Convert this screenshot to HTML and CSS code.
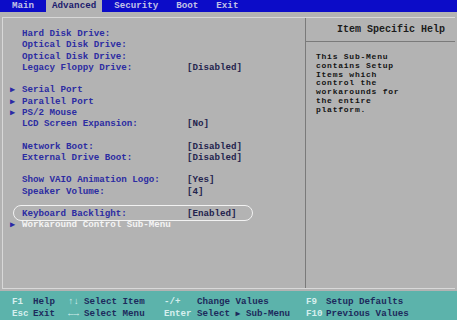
FILE: index.html
```html
<!DOCTYPE html>
<html>
<head>
  <title>BIOS Setup - Advanced</title>
  <link rel="stylesheet" href="styles.css">
</head>
<body>
  <div class="menubar">
    <span class="tab">Main</span>
    <span class="tab active">Advanced</span>
    <span class="tab">Security</span>
    <span class="tab">Boot</span>
    <span class="tab">Exit</span>
  </div>

  <div class="screen">
    <div class="frame">
      <div class="settings">
        <div class="row"><span></span><span class="label">Hard Disk Drive:</span></div>
        <div class="row"><span></span><span class="label">Optical Disk Drive:</span></div>
        <div class="row"><span></span><span class="label">Optical Disk Drive:</span></div>
        <div class="row"><span></span><span class="label">Legacy Floppy Drive:</span><span class="value">[Disabled]</span></div>
        <div class="gap"></div>
        <div class="row"><span class="arrow">&#9654;</span><span class="label">Serial Port</span></div>
        <div class="row"><span class="arrow">&#9654;</span><span class="label">Parallel Port</span></div>
        <div class="row"><span class="arrow">&#9654;</span><span class="label">PS/2 Mouse</span></div>
        <div class="row"><span></span><span class="label">LCD Screen Expansion:</span><span class="value">[No]</span></div>
        <div class="gap"></div>
        <div class="row"><span></span><span class="label">Network Boot:</span><span class="value">[Disabled]</span></div>
        <div class="row"><span></span><span class="label">External Drive Boot:</span><span class="value">[Disabled]</span></div>
        <div class="gap"></div>
        <div class="row"><span></span><span class="label">Show VAIO Animation Logo:</span><span class="value">[Yes]</span></div>
        <div class="row"><span></span><span class="label">Speaker Volume:</span><span class="value">[4]</span></div>
        <div class="gap"></div>
        <div class="row circled"><span></span><span class="label">Keyboard Backlight:</span><span class="value">[Enabled]</span></div>
        <div class="row selected"><span class="arrow">&#9654;</span><span class="label">Workaround Control Sub-Menu</span></div>
      </div>

      <div class="help">
        <div class="help-title">Item Specific Help</div>
        <div class="help-text">
          This Sub-Menu<br>
          contains Setup<br>
          Items which<br>
          control the<br>
          workarounds for<br>
          the entire<br>
          platform.
        </div>
      </div>
    </div>
  </div>

  <div class="footer">
    <span class="key">F1</span><span class="desc">Help</span>
    <span class="key">&#8593;&#8595;</span><span class="desc">Select Item</span>
    <span class="key">-/+</span><span class="desc">Change Values</span>
    <span class="key">F9</span><span class="desc">Setup Defaults</span>

    <span class="key">Esc</span><span class="desc">Exit</span>
    <span class="key">&#8592;&#8594;</span><span class="desc">Select Menu</span>
    <span class="key">Enter</span><span class="desc">Select <span class="mini">&#9654;</span> Sub-Menu</span>
    <span class="key">F10</span><span class="desc">Previous Values</span>
  </div>
</body>
</html>
```

FILE: styles.css
```css
/* Whole page: BIOS style bold mono text on gray */
body {
  margin: 0;
  width: 457px;
  height: 320px;
  overflow: hidden;
  background-color: #b3b3b3;
  font-family: "Liberation Mono", "DejaVu Sans Mono", monospace;
  font-weight: bold;
  font-size: 9.2px;
}

/* Top menu bar */
.menubar {
  display: flex;
  gap: 6px;
  height: 12px;
  padding-left: 6px;
  line-height: 12px;
  background-color: #0c0cc8;
}

.tab {
  padding: 0 6px;
  color: #c2c2e6;
}

.tab.active {
  background-color: #b3b3b3;
  color: #1c1c6e;
}

/* Main framed area */
.screen {
  height: 279px;
  padding: 5px 2px 2px 2px;
  box-sizing: border-box;
}

.frame {
  display: flex;
  height: 100%;
  box-sizing: border-box;
  border: 1px solid #d8d8d8;
  border-right: none;
}

/* Left list of settings */
.settings {
  width: 303px;
  padding: 10px 0 0 7px;
  box-sizing: border-box;
  border-right: 1px solid #7a7a7a;
}

.row {
  display: grid;
  grid-template-columns: 12px 165px auto;
  height: 11.25px;
  line-height: 11.25px;
  white-space: nowrap;
}

.gap {
  height: 11.25px;
}

.arrow {
  font-family: "DejaVu Sans Mono", monospace;
  font-size: 8.5px;
  color: #2a2aa6;
}

.label {
  color: #2c2ca2;
}

.value {
  color: #24244e;
}

.row.selected .label {
  color: #f4f4f4;
}

/* hand drawn ring round the keyboard backlight row */
.row.circled {
  position: relative;
}

.row.circled::after {
  content: "";
  position: absolute;
  left: 3px;
  top: -3.5px;
  width: 238px;
  height: 14px;
  border: 1.5px solid #f2f2f2;
  border-radius: 9px;
}

/* Right help panel */
.help {
  flex: 1;
}

.help-title {
  height: 23px;
  line-height: 23px;
  padding-left: 31px;
  font-size: 10px;
  color: #1c1c1c;
  border-bottom: 1px solid #7a7a7a;
}

.help-text {
  padding: 11px 0 0 10px;
  font-size: 8px;
  letter-spacing: 0.76px;
  line-height: 8.8px;
  color: #141414;
}

/* Bottom key legend */
.footer {
  display: grid;
  grid-template-columns: 21px 35px 16px 80px 33px 109px 20px auto;
  height: 29px;
  padding: 5px 0 0 12px;
  box-sizing: border-box;
  line-height: 11.3px;
  background-color: #5cb3ab;
  white-space: nowrap;
}

.key {
  color: #d6efee;
}

.desc {
  color: #1c2a5c;
}

.mini {
  font-family: "DejaVu Sans Mono", monospace;
  font-size: 8px;
}
```
